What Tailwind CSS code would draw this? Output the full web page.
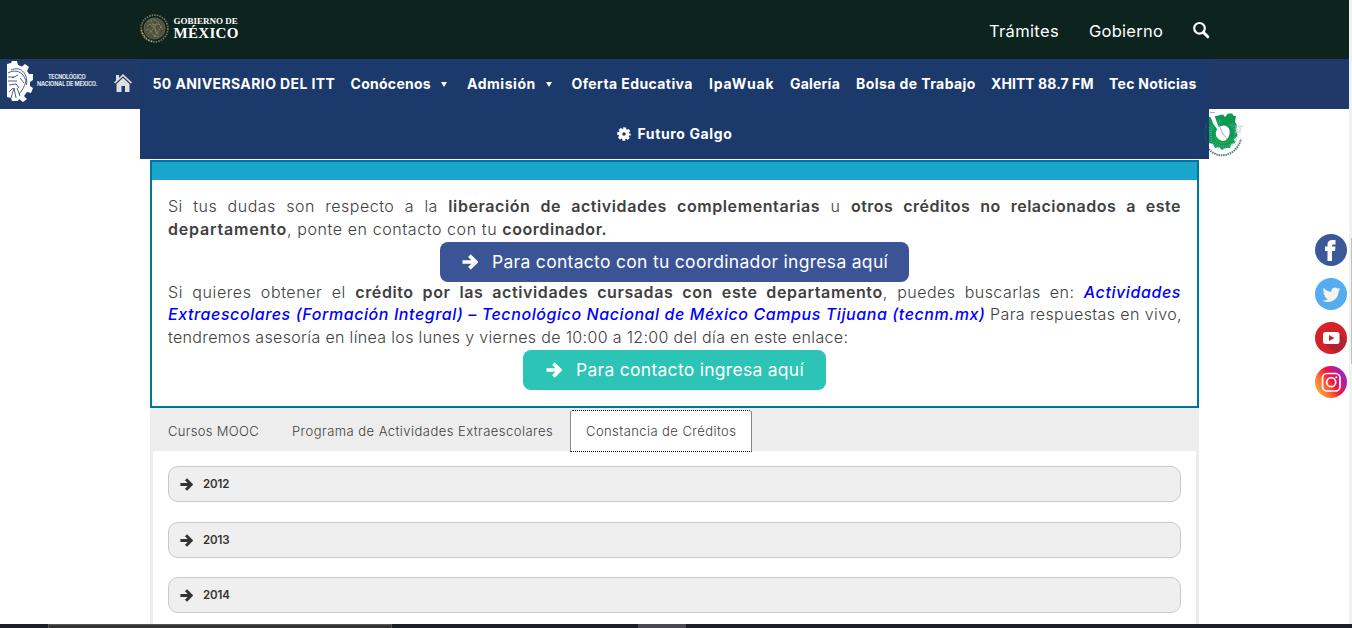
<!DOCTYPE html>
<html lang="es">
<head>
<meta charset="utf-8">
<title>Constancia de Créditos</title>
<script src="https://cdn.jsdelivr.net/npm/@tailwindcss/browser@4"></script>
</head>
<body class="bg-white font-['Inter',sans-serif] text-[#404041]">
<svg width="0" height="0" class="absolute">
  <symbol id="arrow" viewBox="0 0 16 16"><path d="M.5 8H13.500M7.400 1.600L13.800 8L7.400 14.400" fill="none" stroke="currentColor" stroke-width="3.700"/></symbol>
</svg>
<div class="relative h-[628px] w-[1352px] overflow-hidden flex flex-col">
  <header class="h-[59px] w-[1349px] shrink-0 bg-[#0c231e] pl-[140px] flex text-white">
    <a class="flex w-[849px] pt-[14px]">
      <svg class="size-[29px] shrink-0" viewBox="0 0 29 29" fill="none" stroke="#8d8969">
        <circle cx="14.5" cy="14.5" r="13.4" stroke="#77745a" stroke-width="1.7" stroke-dasharray="1.6 1"/>
        <circle cx="14.5" cy="14.5" r="10.6" fill="#4d533f" stroke="#69694f" stroke-width=".8"/>
        <path d="M8 8c3-3 8-3 10 0s3 6 5 7M7 12c3-3 7-2 8 1s-1 6 4 7M6 16c3-1 5 0 6 3s4 4 7 3M11 7l3 4 5-1M8 20l5-5 4-6M14 23l5-7 3-5M10 10l8 9" stroke-width=".9" stroke-dasharray="2 .7"/>
        <path d="M1.5 16c1 5 5 10 11 11.300" stroke="#c4ad78" stroke-width="1.300" stroke-dasharray="1.5 1.500"/>
      </svg>
      <span class="ml-[4.500px] flex flex-col whitespace-nowrap font-['Liberation_Serif',serif] font-bold">
        <span class="mt-[3px] h-[9px] text-[9px] leading-[9px]">GOBIERNO DE</span>
        <span class="h-[15px] text-[15px] leading-[15px] tracking-[0.300px]">MÉXICO</span>
      </span>
    </a>
    <nav class="flex text-[16.500px] leading-[22px] whitespace-nowrap">
      <a class="mt-5 w-[100px] tracking-[0.340px]">Trámites</a>
      <a class="mt-5 w-[104px] tracking-[0.260px]">Gobierno</a>
      <svg class="mt-[21px] h-[18px] w-[17px]" viewBox="0 0 17 18" fill="none" stroke="#fff"><circle cx="6.500" cy="7.300" r="5.300" stroke-width="2.200"/><path d="M10.500 11.500L14.800 15.800" stroke-width="3" stroke-linecap="round"/></svg>
    </nav>
  </header>

  <div class="flex h-[101px] shrink-0">
    <div class="flex h-[50px] w-[140px] bg-[#1f3a68] pl-[6px] pt-[2px]">
      <svg class="h-[41px] w-[28px] shrink-0" viewBox="0 0 28 41">
        <path d="M1 3L5 2 6 0H11L12 4L16 5.500L19 3L23 6L21 10L23 13L27 13V19L24 21V25L27 27L25 32L21 31L18 35L21 38L17 41L13 38L12 40H6L5 37L1 36Z" fill="#fff"/>
        <path d="M2 12C9 8 17 10 20 20C18 27 15 31 13 33M5 9C14 5 22 11 20.500 24M2 16H8M2 20H11M3 24L10 23L13 27M6 17L12 14M5 37L8 27L10 37M3 31L7 27M14 35L11 27M14 17L18 22" fill="none" stroke="#1f3a68" stroke-width=".8"/>
      </svg>
      <div class="ml-[3px] mt-[13px] w-[61px] shrink-0 text-[5.500px] leading-[7px] font-bold whitespace-nowrap text-[#e3e7ef]">
        <div class="pl-[11px] tracking-[-0.300px]">TECNOLÓGICO</div>
        <div class="tracking-[-0.150px]">NACIONAL DE MÉXICO.</div>
      </div>
      <svg class="ml-[15px] mt-[12px] h-[20px] w-[20px] shrink-0" viewBox="0 0 20 20" fill="#dedede"><path d="M3 2H6V5L10 1L19 9.500L17.800 10.500L10 3.300L2.200 10.500L1 9.500L3 7.500Z"/><path d="M10 4.800L16.500 11V19H12V13H8.500V19H3.500V11Z"/></svg>
    </div>
    <nav class="h-[100px] w-[1069px] bg-[#1b396a] text-[14px] leading-[50px] font-bold whitespace-nowrap text-white">
      <div class="flex h-[50px] pl-[12.500px]">
        <a class="w-[198px] tracking-[0.400px]">50 ANIVERSARIO DEL ITT</a>
        <a class="flex w-[116.500px] items-center tracking-[0.280px]">Conócenos<svg class="ml-[10.500px] mt-px h-[5px] w-[6px]" viewBox="0 0 6 5"><path d="M0 0H6L3 5Z" fill="#fff"/></svg></a>
        <a class="flex w-[104.500px] items-center tracking-[0.540px]">Admisión<svg class="ml-[10px] mt-px h-[5px] w-[6px]" viewBox="0 0 6 5"><path d="M0 0H6L3 5Z" fill="#fff"/></svg></a>
        <a class="w-[137.500px] tracking-[0.400px]">Oferta Educativa</a>
        <a class="w-[81px] tracking-[0.800px]">IpaWuak</a>
        <a class="w-[66px] tracking-[0.210px]">Galería</a>
        <a class="w-[135px] tracking-[0.420px]">Bolsa de Trabajo</a>
        <a class="w-[118px] tracking-[0.060px]">XHITT 88.7 FM</a>
        <a class="tracking-[0.270px]">Tec Noticias</a>
      </div>
      <div class="flex h-[50px] items-center pl-[477px]">
        <svg class="mr-[6.500px] size-[14px]" viewBox="0 0 14 14"><circle cx="7" cy="7" r="3.600" fill="none" stroke="#fff" stroke-width="3.600"/><circle cx="7" cy="7" r="5.600" fill="none" stroke="#fff" stroke-width="2.400" stroke-dasharray="2.800 1.598" stroke-dashoffset="1.400"/></svg>
        <a class="tracking-[0.620px]">Futuro Galgo</a>
      </div>
    </nav>
    <div class="h-[50px] w-[140px] bg-[#1f3a68]"></div>
  </div>

  <main class="ml-[150px] w-[1049px]">
    <section class="h-[248px] border-2 border-[#00749c]">
      <div class="h-[18px] bg-[#1aa5cd]"></div>
      <div class="px-4 pt-[15px] text-[16px] leading-[22.500px] font-light whitespace-nowrap">
        <p class="[text-align-last:justify] tracking-[0.500px]">Si tus dudas son respecto a la <b class="font-semibold tracking-[0.590px]">liberación de actividades complementarias</b> u <b class="font-semibold">otros créditos no relacionados a este</b></p>
        <p><b class="font-semibold tracking-[0.820px]">departamento</b><span class="tracking-[0.590px]">, ponte en contacto con tu </span><b class="font-semibold tracking-[0.570px]">coordinador.</b></p>
        <div class="mt-[2px] flex h-10 justify-center">
          <a class="flex w-[469px] items-center rounded-lg bg-[#3b5495] pl-[22px] text-[17.500px] font-normal text-white"><svg class="mr-[14px] size-4"><use href="#arrow"/></svg><span class="tracking-[0.300px]">Para contacto con tu coordinador ingresa aquí</span></a>
        </div>
        <p class="-mt-px [text-align-last:justify] tracking-[0.580px]">Si quieres obtener el <b class="font-semibold tracking-[0.600px]">crédito por las actividades cursadas con este departamento</b>, <span class="tracking-[0.450px]">puedes buscarlas en:</span> <i class="font-medium text-[#0000ff]">Actividades</i></p>
        <p class="-mt-px mb-px [text-align-last:justify]"><i class="font-medium tracking-[0.580px] text-[#0000ff]">Extraescolares (Formación Integral) – Tecnológico Nacional de México Campus Tijuana (tecnm.mx)</i> <span class="tracking-[0.400px]">Para respuestas en vivo,</span></p>
        <p class="tracking-[0.340px]">tendremos asesoría en línea los lunes y viernes de 10:00 a 12:00 del día en este enlace:</p>
        <div class="mt-[1.500px] flex h-10 justify-center">
          <a class="flex w-[303px] items-center rounded-lg bg-[#2bc4b6] pl-[23px] text-[17.500px] font-normal text-white"><svg class="mr-[14px] size-4"><use href="#arrow"/></svg><span class="tracking-[0.280px]">Para contacto ingresa aquí</span></a>
        </div>
      </div>
    </section>

    <section class="h-[216px] rounded-t-[3px] border-x-[3px] border-[#ededed]">
      <div class="flex h-[43px] bg-[#ededed] pl-[15px] pt-[2px] text-[13px] leading-[42px] font-light whitespace-nowrap">
        <a class="w-[124px] tracking-[0.320px]">Cursos MOOC</a>
        <a class="w-[278px] tracking-[0.460px]">Programa de Actividades Extraescolares</a>
        <a class="h-[42px] w-[182px] rounded-t-[3px] border border-dotted border-x-[#888] border-y-black bg-white pl-[15px] leading-[41px] tracking-[0.430px] [border-left-style:solid] [border-right-style:solid]">Constancia de Créditos</a>
      </div>
      <div class="flex flex-col pl-[15px] pt-[15px] text-[11.500px] font-semibold text-[#333]">
        <div class="mb-5 flex h-9 w-[1013px] items-center rounded-[10px] border border-[#c9cacb] bg-[#efefef] pl-[10.500px]"><svg class="mr-[10.500px] size-[13px]"><use href="#arrow"/></svg><span class="pt-px tracking-[-0.150px]">2012</span></div>
        <div class="mb-[19px] flex h-9 w-[1013px] items-center rounded-[10px] border border-[#c9cacb] bg-[#efefef] pl-[10.500px]"><svg class="mr-[10.500px] size-[13px]"><use href="#arrow"/></svg><span class="pt-px tracking-[-0.150px]">2013</span></div>
        <div class="flex h-9 w-[1013px] items-center rounded-[10px] border border-[#c9cacb] bg-[#efefef] pl-[10.500px]"><svg class="mr-[10.500px] size-[13px]"><use href="#arrow"/></svg><span class="pt-px tracking-[-0.150px]">2014</span></div>
      </div>
    </section>
  </main>

  <footer class="flex h-1 w-full shrink-0 bg-[#1c1e27]">
    <div class="ml-12 h-1 w-[344px] border border-b-0 border-[#555] bg-[#333]"></div>
    <div class="ml-[246px] h-1 w-12 bg-[#484752]"></div>
  </footer>

  <svg class="absolute left-[1203px] top-[110px] h-[47px] w-[40px]" viewBox="0 0 40 47">
    <path d="M13 6L20 4.500L22 7L25 3.500H29L31 6H33L32 12L34 15L33 20L34.500 26L31 29L32 33L28 34L27 38L22 38L19 40L16 37L12 38L10 34L6 33L4 14L6 7Z" fill="#10975a"/>
    <circle cx="20" cy="24" r="13" fill="none" stroke="#54bd86" stroke-width="4" stroke-dasharray=".6 1.600"/>
    <path d="M14 6L22 7L32 6L31 13L21 15Z" fill="#0a9a4b"/>
    <path d="M12 27C14 34 25 36 29 27" stroke="#1db32b" stroke-width="1.500" fill="none"/>
    <path d="M15 18C19 14 25 15 26.500 20C27.500 26 24 31 20 31C14 30 10 24 15 18Z" fill="#fff"/>
    <path d="M6 0L11 4L14 13L18 22L14.500 20L10 13L7 6Z" fill="#fff"/>
    <path d="M7 2.500H12M16 15L20 24L24 29" stroke="#999" stroke-width=".8" fill="none"/>
    <path d="M32 16H40M32 19H35M37 17V23M32 22H36" stroke="#c8c8c8" fill="none"/>
    <path d="M6 39C13 49 33 48 38 29" stroke="#587f65" stroke-width="2" stroke-dasharray="1.500 .8" fill="none"/>
    <path d="M0 0H6V47H0Z" fill="#1b396a"/>
    <path d="M3.500 14C1.500 20 1.500 28 4.500 34" stroke="#175668" stroke-width="2" stroke-dasharray="1.500 1" fill="none"/>
  </svg>

  <aside class="absolute left-[1315px] top-[234px] flex flex-col gap-3">
    <svg class="size-8" viewBox="0 0 32 32"><circle cx="16" cy="16" r="16" fill="#3b5998"/><path d="M12.500 27V17H10V12.500H12.500V10.500C12.500 7.500 14 6 17.500 6H20.500V10.500H18.500C17.300 10.500 17 11 17 12V12.500H20.500L20 17H17V27Z" fill="#fff"/></svg>
    <svg class="size-8" viewBox="0 0 32 32"><circle cx="16" cy="16" r="16" fill="#55acee"/><path d="M25.500 11.200c-.7.300-1.300.5-2.100.6.800-.4 1.300-1.100 1.600-2-.7.400-1.500.7-2.300.9a3.700 3.700 0 0 0-6.300 3.300c-3-.1-5.800-1.600-7.600-3.900-1 1.700-.5 3.800 1.100 4.900-.6 0-1.100-.2-1.600-.5 0 1.800 1.200 3.300 2.900 3.700-.5.200-1.100.2-1.600.1.500 1.400 1.800 2.500 3.400 2.600A7.500 7.500 0 0 1 7.600 22.500c6.600 4.100 16-.3 16-9.400.8-.5 1.400-1.200 1.900-1.900Z" fill="#f4f4f4"/></svg>
    <svg class="size-8" viewBox="0 0 32 32"><circle cx="16" cy="16" r="16" fill="#d3222a"/><path d="M23.500 11L31.600 19A16 16 0 0 1 20 31.500L9 21Z" fill="#b4222f"/><rect x="8" y="10" width="16.500" height="12" rx="2.500" fill="#fff"/><path d="M14 13V19L19.500 16Z" fill="#c9222b"/></svg>
    <svg class="size-8" viewBox="0 0 32 32"><defs><linearGradient id="ig" x1="0" y1=".8" x2="1" y2=".2"><stop stop-color="#ffb13d"/><stop offset=".3" stop-color="#ff6a35"/><stop offset=".55" stop-color="#f3123f"/><stop offset=".8" stop-color="#b51f9c"/><stop offset="1" stop-color="#8a30cf"/></linearGradient></defs><circle cx="16" cy="16" r="16" fill="url(#ig)"/><rect x="7.500" y="7.500" width="17.500" height="17.500" rx="4.500" fill="none" stroke="#fff" stroke-width="1.700"/><circle cx="16.200" cy="16.200" r="4.500" fill="none" stroke="#fff" stroke-width="1.700"/><circle cx="21.300" cy="11.200" r="1" fill="#fff"/></svg>
  </aside>

  <div class="absolute left-[1349px] top-0 h-[624px] w-[3px] bg-[#f1f1f1]"><div class="ml-[2px] h-[364px] w-px border-t-[238px] border-[#f1f1f1] bg-[#c1c1c1]"></div></div>
</div>
</body>
</html>
